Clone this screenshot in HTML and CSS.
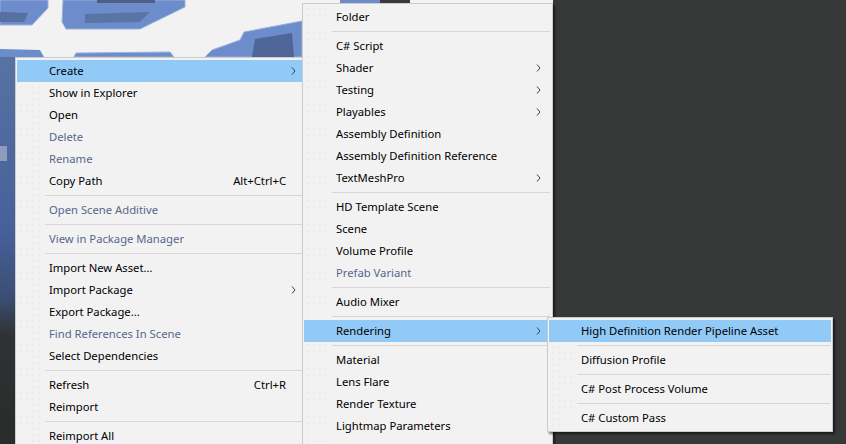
FILE: index.html
```html
<!DOCTYPE html>
<html lang="en">
<head>
<meta charset="utf-8">
<title>Project context menu</title>
<link rel="stylesheet" href="styles.css">
</head>
<body>
<div class="stage">
  <svg class="backdrop" width="846" height="444" viewBox="0 0 846 444" aria-hidden="true">
    <rect x="0" y="0" width="846" height="444" fill="#373838"/>
    <rect x="0" y="0" width="553" height="444" fill="#f2f2f2"/>
    <rect x="340" y="0" width="40" height="4" fill="#6c8ccc"/>
    <rect x="380" y="0" width="30" height="4" fill="#383a3c"/>
    <polygon points="0,0 48,0 48,8 32,25 0,25" fill="#6c8ccc" stroke="#9cb2dc" stroke-width="1"/>
    <polygon points="0,12 28,13 24,22 0,22" fill="#56709f"/>
    <polygon points="63,0 185,0 185,7 140,29 66,29 62,22" fill="#6c8ccc" stroke="#9cb2dc" stroke-width="1"/>
    <rect x="97" y="0" width="58" height="3" fill="#4d5f85"/>
    <polygon points="85,14 150,12 140,22 85,23" fill="#5a74a6"/>
    <polygon points="244,32 302,21 302,57 205,57 212,50 240,40" fill="#6c8ccc" stroke="#9cb2dc" stroke-width="1"/>
    <polygon points="255,39 292,33 294,57 252,57" fill="#4f6699"/>
    <polygon points="0,49 40,50 44,57 0,57" fill="#6c8ccc"/>
    <polygon points="76,53 170,52 174,57 74,57" fill="#6c8ccc" stroke="#9cb2dc" stroke-width="1"/>
    <rect x="0" y="57" width="16" height="387" fill="url(#leftfade)"/>
    <rect x="0" y="146" width="7" height="15" fill="#aab4c8" opacity="0.7"/>
    <defs>
      <linearGradient id="leftfade" x1="0" y1="0" x2="0" y2="1">
        <stop offset="0" stop-color="#5872a4"/>
        <stop offset="0.45" stop-color="#46609a"/>
        <stop offset="0.62" stop-color="#3c4e74"/>
        <stop offset="0.72" stop-color="#2f3233"/>
        <stop offset="1" stop-color="#2a2b2b"/>
      </linearGradient>
    </defs>
  </svg>

  <div class="menu menu-main">
    <div class="item hl sub"><span class="label">Create</span><span class="arrow"><svg width="5" height="8" viewBox="0 0 5 8"><path d="M1 0.5 L4 4 L1 7.5" fill="none" stroke="#404040" stroke-width="1"/></svg></span></div>
    <div class="item"><span class="label">Show in Explorer</span><span class="arrow"></span></div>
    <div class="item"><span class="label">Open</span><span class="arrow"></span></div>
    <div class="item off"><span class="label">Delete</span><span class="arrow"></span></div>
    <div class="item off"><span class="label">Rename</span><span class="arrow"></span></div>
    <div class="item"><span class="label">Copy Path</span><span class="key">Alt+Ctrl+C</span><span class="arrow"></span></div>
    <div class="sep"></div>
    <div class="item off"><span class="label">Open Scene Additive</span><span class="arrow"></span></div>
    <div class="sep"></div>
    <div class="item off"><span class="label">View in Package Manager</span><span class="arrow"></span></div>
    <div class="sep"></div>
    <div class="item"><span class="label">Import New Asset...</span><span class="arrow"></span></div>
    <div class="item sub"><span class="label">Import Package</span><span class="arrow"><svg width="5" height="8" viewBox="0 0 5 8"><path d="M1 0.5 L4 4 L1 7.5" fill="none" stroke="#404040" stroke-width="1"/></svg></span></div>
    <div class="item"><span class="label">Export Package...</span><span class="arrow"></span></div>
    <div class="item off"><span class="label">Find References In Scene</span><span class="arrow"></span></div>
    <div class="item"><span class="label">Select Dependencies</span><span class="arrow"></span></div>
    <div class="sep"></div>
    <div class="item"><span class="label">Refresh</span><span class="key">Ctrl+R</span><span class="arrow"></span></div>
    <div class="item"><span class="label">Reimport</span><span class="arrow"></span></div>
    <div class="sep"></div>
    <div class="item"><span class="label">Reimport All</span><span class="arrow"></span></div>
  </div>

  <div class="menu menu-create">
    <div class="item"><span class="label">Folder</span><span class="arrow"></span></div>
    <div class="sep"></div>
    <div class="item"><span class="label">C# Script</span><span class="arrow"></span></div>
    <div class="item sub"><span class="label">Shader</span><span class="arrow"><svg width="5" height="8" viewBox="0 0 5 8"><path d="M1 0.5 L4 4 L1 7.5" fill="none" stroke="#404040" stroke-width="1"/></svg></span></div>
    <div class="item sub"><span class="label">Testing</span><span class="arrow"><svg width="5" height="8" viewBox="0 0 5 8"><path d="M1 0.5 L4 4 L1 7.5" fill="none" stroke="#404040" stroke-width="1"/></svg></span></div>
    <div class="item sub"><span class="label">Playables</span><span class="arrow"><svg width="5" height="8" viewBox="0 0 5 8"><path d="M1 0.5 L4 4 L1 7.5" fill="none" stroke="#404040" stroke-width="1"/></svg></span></div>
    <div class="item"><span class="label">Assembly Definition</span><span class="arrow"></span></div>
    <div class="item"><span class="label">Assembly Definition Reference</span><span class="arrow"></span></div>
    <div class="item sub"><span class="label">TextMeshPro</span><span class="arrow"><svg width="5" height="8" viewBox="0 0 5 8"><path d="M1 0.5 L4 4 L1 7.5" fill="none" stroke="#404040" stroke-width="1"/></svg></span></div>
    <div class="sep"></div>
    <div class="item"><span class="label">HD Template Scene</span><span class="arrow"></span></div>
    <div class="item"><span class="label">Scene</span><span class="arrow"></span></div>
    <div class="item"><span class="label">Volume Profile</span><span class="arrow"></span></div>
    <div class="item off"><span class="label">Prefab Variant</span><span class="arrow"></span></div>
    <div class="sep"></div>
    <div class="item"><span class="label">Audio Mixer</span><span class="arrow"></span></div>
    <div class="sep"></div>
    <div class="item hl sub"><span class="label">Rendering</span><span class="arrow"><svg width="5" height="8" viewBox="0 0 5 8"><path d="M1 0.5 L4 4 L1 7.5" fill="none" stroke="#404040" stroke-width="1"/></svg></span></div>
    <div class="sep"></div>
    <div class="item"><span class="label">Material</span><span class="arrow"></span></div>
    <div class="item"><span class="label">Lens Flare</span><span class="arrow"></span></div>
    <div class="item"><span class="label">Render Texture</span><span class="arrow"></span></div>
    <div class="item"><span class="label">Lightmap Parameters</span><span class="arrow"></span></div>
    <div class="item sub"><span class="label">Visual Effects</span><span class="arrow"><svg width="5" height="8" viewBox="0 0 5 8"><path d="M1 0.5 L4 4 L1 7.5" fill="none" stroke="#404040" stroke-width="1"/></svg></span></div>
  </div>

  <div class="menu menu-render">
    <div class="item hl"><span class="label">High Definition Render Pipeline Asset</span><span class="arrow"></span></div>
    <div class="sep"></div>
    <div class="item"><span class="label">Diffusion Profile</span><span class="arrow"></span></div>
    <div class="sep"></div>
    <div class="item"><span class="label">C# Post Process Volume</span><span class="arrow"></span></div>
    <div class="sep"></div>
    <div class="item"><span class="label">C# Custom Pass</span><span class="arrow"></span></div>
  </div>
</div>
</body>
</html>
```

FILE: styles.css
```css
* {
  box-sizing: border-box;
}

html,
body {
  margin: 0;
  padding: 0;
  background: #373838;
}

body {
  font-family: "Noto Sans", "Open Sans", sans-serif;
  font-size: 11.25px;
  color: #000;
}

.stage {
  position: relative;
  width: 846px;
  height: 444px;
  overflow: hidden;
}

.backdrop {
  position: absolute;
  left: 0;
  top: 0;
  display: block;
}

.menu {
  position: absolute;
  z-index: 1;
  background: #f2f2f2;
  border: 1px solid #cccccc;
  padding: 2px 1px;
  box-shadow: 2px 2px 2px rgba(0, 0, 0, 0.5);
}

.menu::before {
  content: "";
  position: absolute;
  z-index: -1;
  left: 4px;
  top: 4px;
  bottom: 4px;
  width: 24px;
  background-image: radial-gradient(circle at 1px 1px, #e0e0e0 0.5px, transparent 0.8px);
  background-size: 6px 6px;
}

.menu-main {
  left: 15px;
  top: 57px;
  width: 293px;
  height: 420px;
}

.menu-create {
  left: 302px;
  top: 3px;
  width: 251px;
  height: 470px;
}

.menu-render {
  left: 547px;
  top: 317px;
  width: 286px;
}

.item {
  display: flex;
  align-items: center;
  height: 22px;
  padding-left: 32px;
  padding-bottom: 2px;
  white-space: nowrap;
}

.item.hl {
  background: #91c9f7;
}

.item.off {
  color: #56678b;
}

.label {
  flex: 1;
}

.key {
  text-align: right;
}

.arrow {
  width: 20px;
  display: flex;
  align-items: center;
  padding-left: 5px;
  padding-top: 2px;
}

.arrow svg {
  display: block;
}

.sep {
  display: flex;
  align-items: center;
  height: 7px;
  padding-left: 28px;
  padding-right: 1px;
}

.sep::after {
  content: "";
  flex: 1;
  height: 1px;
  background: #d7d7d7;
}
```
